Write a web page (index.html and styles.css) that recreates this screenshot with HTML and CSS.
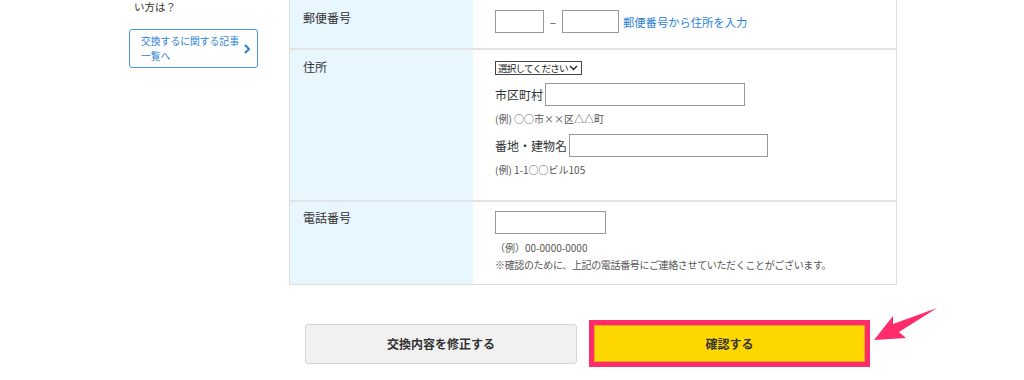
FILE: index.html
```html
<!DOCTYPE html>
<html lang="ja">
<head>
  <meta charset="UTF-8">
  <title>交換内容の入力</title>
  <link rel="stylesheet" href="styles.css">
</head>
<body>
  <div class="page">
    <aside class="side">
      <p class="side-text">い方は？</p>
      <a class="side-link" href="#">
        <span>交換するに関する記事<br>一覧へ</span>
        <svg width="8" height="12" viewBox="0 0 8 12"><path d="M2 2l4 4-4 4" fill="none" stroke="#2d7fd3" stroke-width="2"/></svg>
      </a>
    </aside>

    <main class="main">
      <div class="form-table">
        <div class="row row-zip">
          <div class="label">郵便番号</div>
          <div class="value">
            <div class="zip">
              <input type="text" class="zip1">
              <span class="dash">–</span>
              <input type="text" class="zip2">
              <a href="#" class="zip-link">郵便番号から住所を入力</a>
            </div>
          </div>
        </div>

        <div class="row row-addr">
          <div class="label">住所</div>
          <div class="value">
            <div class="select-wrap">
              <select class="pref">
                <option>選択してください</option>
              </select>
              <svg class="caret" width="9" height="6" viewBox="0 0 9 6"><path d="M1 1l3.5 3.5L8 1" fill="none" stroke="#222" stroke-width="1.4"/></svg>
            </div>
            <div class="line">
              <span>市区町村</span>
              <input type="text" class="city">
            </div>
            <p class="ex">(例) ○○市××区△△町</p>
            <div class="line">
              <span>番地・建物名</span>
              <input type="text" class="street">
            </div>
            <p class="ex">(例) 1-1○○ビル105</p>
          </div>
        </div>

        <div class="row row-tel">
          <div class="label">電話番号</div>
          <div class="value">
            <input type="text" class="tel">
            <p class="ex ex-tel">（例）00-0000-0000</p>
            <p class="ex note">※確認のために、上記の電話番号にご連絡させていただくことがございます。</p>
          </div>
        </div>
      </div>

      <div class="buttons">
        <button class="btn btn-back">交換内容を修正する</button>
        <div class="confirm-wrap">
          <button class="btn btn-confirm">確認する</button>
          <svg class="arrow" width="70" height="40" viewBox="0 0 70 40">
            <polygon points="3,35 22,11 22,19 66,3 28,27 35,33" fill="#ff2b6b"/>
          </svg>
        </div>
      </div>
    </main>
  </div>
</body>
</html>
```

FILE: styles.css
```css
body {
  margin: 0;
  background: #fff;
  color: #333;
  font-family: "Noto Sans CJK JP", "Noto Sans", sans-serif;
  font-size: 12px;
}
.page {
  display: flex;
  width: 1024px;
  height: 380px;
  overflow: hidden;
}
.side {
  width: 160px;
  padding-left: 129px;
  flex-shrink: 0;
}
.side-text {
  margin: 0 0 0 5px;
  font-size: 10.5px;
  line-height: 13px;
}
.side-link {
  display: flex;
  align-items: center;
  justify-content: space-between;
  box-sizing: border-box;
  width: 129px;
  height: 39px;
  margin-top: 16px;
  padding: 0 6px 0 11px;
  border: 1px solid #4b95e0;
  border-radius: 3px;
  color: #2d7fd3;
  text-decoration: none;
  font-size: 9.8px;
  line-height: 15px;
  white-space: nowrap;
}
.main {
  width: 608px;
}
.form-table {
  border: 1px solid #ddd;
  border-top: none;
}
.row {
  display: flex;
  border-top: 2px solid #e3e3e3;
}
.row:first-child {
  border-top: none;
}
.label {
  width: 170px;
  flex-shrink: 0;
  padding: 9px 0 0 13px;
  background: #e8f6fe;
  line-height: 18px;
}
.value {
  flex: 1;
  padding-left: 22px;
}
input[type="text"] {
  box-sizing: border-box;
  height: 23px;
  margin: 0;
  border: 1px solid #999;
  background: #fff;
  font-family: inherit;
}
.row-zip {
  height: 48px;
}
.zip {
  display: flex;
  align-items: center;
  padding-top: 10px;
}
.zip1 {
  width: 49px;
}
.dash {
  width: 18px;
  text-align: center;
  color: #555;
}
.zip2 {
  width: 57px;
}
.zip-link {
  margin-left: 4px;
  color: #2d7fd3;
  text-decoration: none;
  font-size: 11.3px;
}
.row-addr {
  height: 150px;
}
.row-addr .label {
  padding-top: 8px;
}
.select-wrap {
  position: relative;
  width: 87px;
  margin-top: 11px;
}
.pref {
  display: block;
  box-sizing: border-box;
  width: 87px;
  height: 14px;
  margin: 0;
  padding: 0 0 0 2px;
  border: 1px solid #444;
  border-radius: 0;
  background: #fff;
  color: #222;
  font-family: inherit;
  font-size: 9.6px;
  line-height: 12px;
  letter-spacing: -0.8px;
  appearance: none;
  -webkit-appearance: none;
}
.caret {
  position: absolute;
  right: 4px;
  top: 4px;
}
.line {
  display: flex;
  align-items: center;
  gap: 2px;
  margin-top: 8px;
}
.city {
  width: 200px;
}
.street {
  width: 199px;
}
.ex {
  margin: 6px 0 0;
  font-size: 10px;
  line-height: 14px;
  color: #555;
}
.row-tel {
  height: 82px;
}
.row-tel .label {
  padding-top: 7px;
}
.tel {
  width: 111px;
  margin-top: 9px !important;
}
.ex-tel {
  margin-top: 7px;
}
.note {
  margin-top: 3px;
  letter-spacing: -0.35px;
}
.buttons {
  display: flex;
  align-items: center;
  gap: 12px;
  margin-top: 35px;
  padding-left: 16px;
}
.btn {
  box-sizing: border-box;
  font-family: inherit;
  font-size: 12px;
  font-weight: bold;
  color: #333;
  cursor: pointer;
}
.btn-back {
  width: 272px;
  height: 40px;
  border: 1px solid #d6d6d6;
  border-radius: 3px;
  background: #f1f1f1;
}
.confirm-wrap {
  position: relative;
}
.btn-confirm {
  display: block;
  width: 281px;
  height: 47px;
  border: 5px solid #ff2b6b;
  background: #ffd700;
  box-shadow: inset 0 0 0 1px #f0a020;
}
.arrow {
  position: absolute;
  left: 282px;
  top: -15px;
}
```
